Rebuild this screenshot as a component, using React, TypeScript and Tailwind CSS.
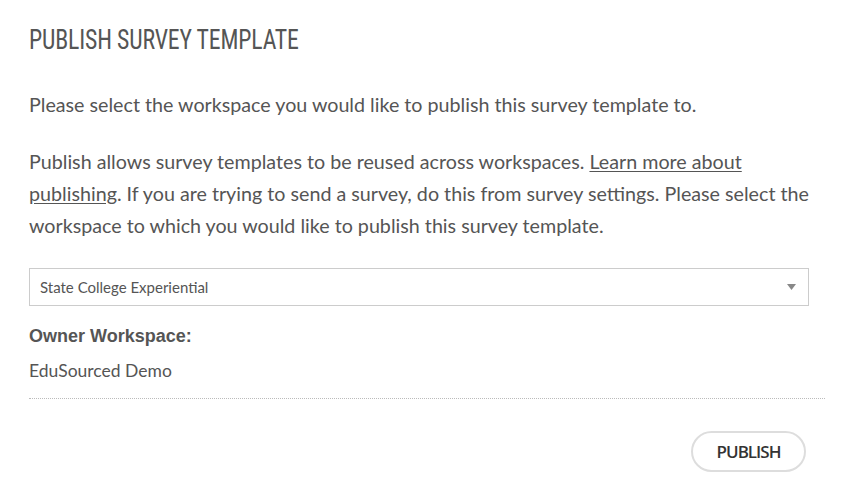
import React from 'react';

const App = () => {
  return (
    <div className="w-[849px] h-[500px] bg-white px-[29px] pt-[24px] text-[#555]" style={{ fontFamily: 'Lato, "Open Sans", sans-serif' }}>
      {/* Header */}
      <h1
        className="text-[28px] leading-[32px] text-[#555] uppercase tracking-[-0.2px] origin-left scale-x-[0.85]"
        style={{ fontFamily: '"Liberation Sans Narrow", "Roboto", sans-serif', fontStretch: 'condensed' }}
      >
        Publish Survey Template
      </h1>

      <p className="mt-[33px] text-[19.7px] leading-[32px]">
        Please select the workspace you would like to publish this survey template to.
      </p>

      <p className="mt-[25px] text-[19.7px] leading-[32px] w-[790px]">
        Publish allows survey templates to be reused across workspaces.{' '}
        <a href="#" className="underline underline-offset-2">Learn more about publishing</a>
        . If you are trying to send a survey, do this from survey settings. Please select the workspace to which you would like to publish this survey template.
      </p>

      {/* Workspace select */}
      <div className="mt-[26px] w-[780px] h-[38px] border border-[#ccc] flex items-center justify-between pl-[10px] pr-[12px]">
        <span className="text-[15px] text-[#555]">State College Experiential</span>
        <svg width="9" height="6" viewBox="0 0 9 6">
          <path d="M0 0 L9 0 L4.5 6 Z" fill="#888" />
        </svg>
      </div>

      <div className="mt-[17px] text-[18px] font-bold text-[#555]" style={{ fontFamily: '"Liberation Sans", Arial, sans-serif' }}>
        Owner Workspace:
      </div>
      <div className="mt-[8px] text-[17.5px] text-[#555]">EduSourced Demo</div>

      <div className="mt-[14px] w-[796px] border-t border-dotted border-[#bbb]" />

      <div className="flex justify-end w-[777px] mt-[32px]">
        <button
          className="w-[115px] h-[41px] rounded-full border-2 border-[#ddd] text-[17px] font-semibold text-[#333] tracking-[-1px]"
          style={{ fontFamily: '"Open Sans", sans-serif' }}
        >
          PUBLISH
        </button>
      </div>
    </div>
  );
};

export default App;
